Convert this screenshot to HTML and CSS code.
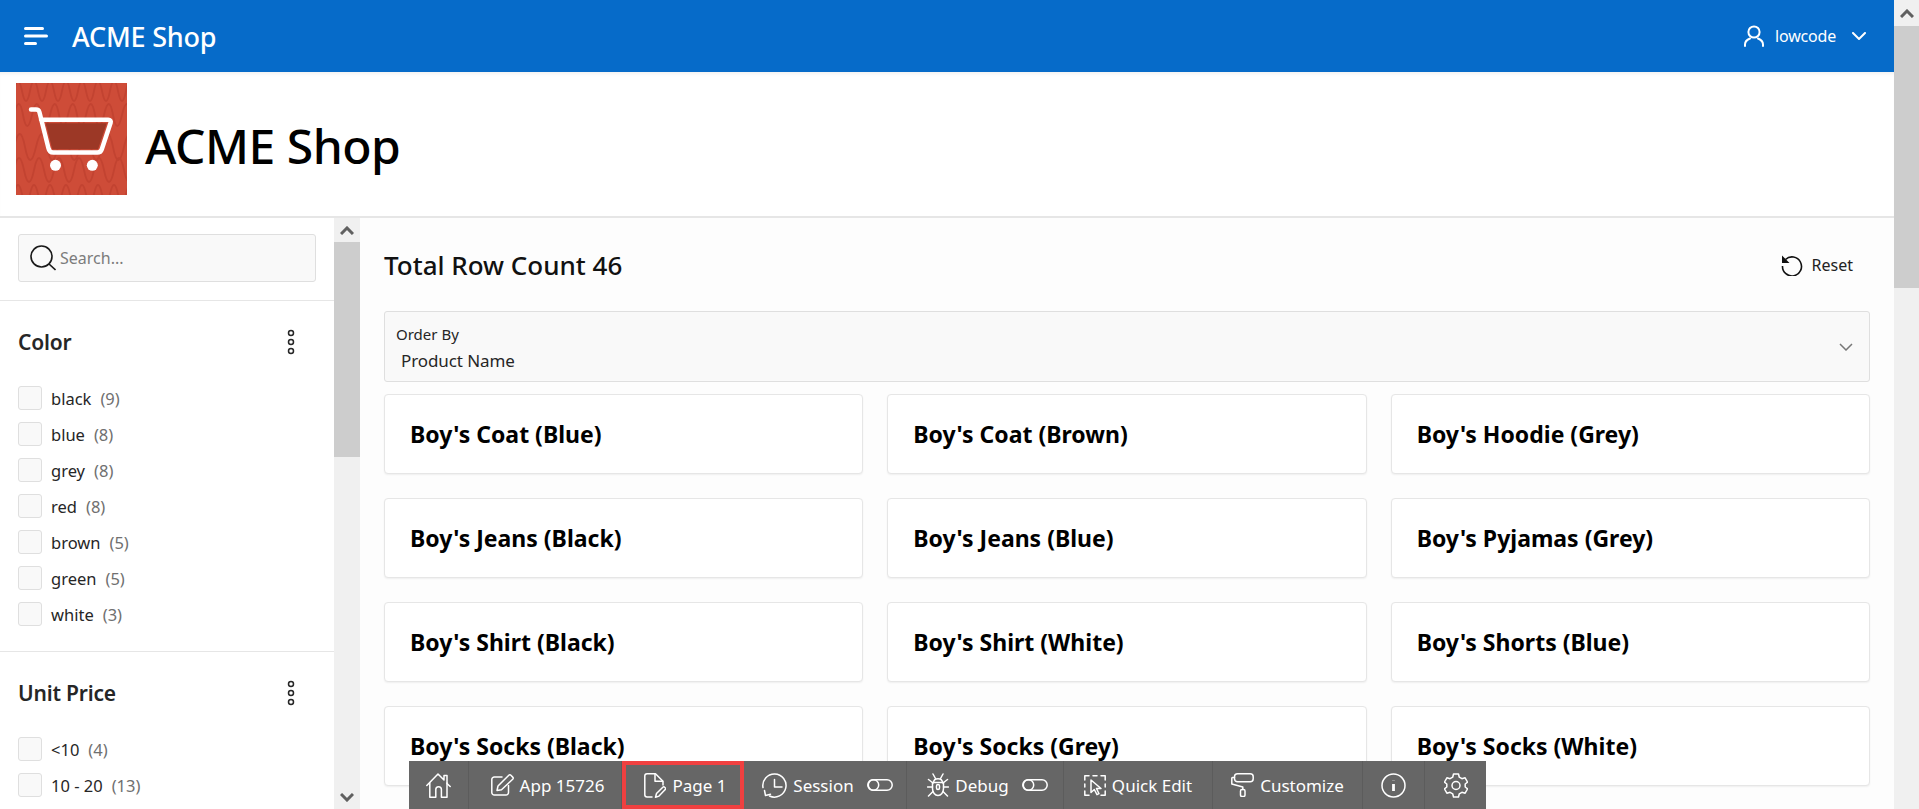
FILE: index.html
```html
<!DOCTYPE html>
<html>
<head>
  <title>ACME Shop</title>
  <link rel="stylesheet" href="styles.css">
</head>
<body>
  <div class="window">
    <div class="page">
      <header class="topbar">
        <svg class="menu-icon" width="24" height="20" viewBox="0 0 24 20"><path d="M1.500 2.500h17M1.500 10h21M1.500 17.500h10" /></svg>
        <span class="brand">ACME Shop</span>
        <div class="user">
          <svg class="user-icon" width="20" height="22" viewBox="0 0 20 22"><circle cx="10" cy="7" r="5.600" /><path d="M1 21v-1.500c0-3 2.500-5 5-6M19 21v-1.500c0-3-2.500-5-5-6" /></svg>
          <span class="user-name">lowcode</span>
          <svg class="user-chevron" width="14" height="8" viewBox="0 0 14 8"><path d="M1 1l6 6 6-6" /></svg>
        </div>
      </header>

      <section class="hero">
        <svg class="logo" width="111" height="112" viewBox="0 0 111 112">
          <rect width="111" height="112" fill="#ce4c38" />
          <path class="wave" d="M-2 8q4-20 8 0t8 0 8 0 8 0 8 0 8 0 8 0 8 0 8 0 8 0 8 0 8 0 8 0 8 0 8 0" />
          <path class="wave" d="M-2 32q5-22 9 0t9 0 9 0 9 0 9 0 9 0 9 0 9 0 9 0 9 0 9 0 9 0 9 0" />
          <path class="wave" d="M-2 64q6-26 11 0t11 0 11 0 11 0 11 0 11 0 11 0 11 0 11 0 11 0 11 0" />
          <path class="wave" d="M-2 87q5-24 10 0t10 0 10 0 10 0 10 0 10 0 10 0 10 0 10 0 10 0 10 0 10 0" />
          <path class="wave" d="M-2 111q4-18 8 0t8 0 8 0 8 0 8 0 8 0 8 0 8 0 8 0 8 0 8 0 8 0 8 0 8 0 8 0" />
          <path d="M29.700 40.300h61L82 66.300H36.300z" fill="#9c3826" />
          <path d="M15 26.500h5c2 0 3 1 3.400 2.500l9 36c.6 3 2 4.500 5 4.500h44c2.500 0 3.700-1.200 4.400-3.300l8.800-26.500c.6-1.800-.4-3-2.300-3H25" fill="none" stroke="#fff" stroke-width="4.500" stroke-linecap="round" stroke-linejoin="round" />
          <circle cx="39.500" cy="82.300" r="5.500" fill="#fff" />
          <circle cx="76.300" cy="82.300" r="5.500" fill="#fff" />
        </svg>
        <h1 class="hero-title">ACME Shop</h1>
      </section>

      <div class="content">
        <aside class="sidebar">
          <div class="search-row">
            <div class="search">
              <svg class="search-icon" width="26" height="26" viewBox="0 0 26 26"><circle cx="11.500" cy="11.500" r="10.500" /><path d="M19 19l6.500 6" /></svg>
              <span class="search-hint">Search...</span>
            </div>
          </div>

          <div class="facet facet-color">
            <div class="facet-head">
              <h2 class="facet-title">Color</h2>
              <svg class="more" width="8" height="26" viewBox="0 0 8 26"><circle cx="4" cy="4" r="2.500" /><circle cx="4" cy="13" r="2.500" /><circle cx="4" cy="22" r="2.500" /></svg>
            </div>
            <label class="check"><span class="box"></span>black<span class="count">(9)</span></label>
            <label class="check"><span class="box"></span>blue<span class="count">(8)</span></label>
            <label class="check"><span class="box"></span>grey<span class="count">(8)</span></label>
            <label class="check"><span class="box"></span>red<span class="count">(8)</span></label>
            <label class="check"><span class="box"></span>brown<span class="count">(5)</span></label>
            <label class="check"><span class="box"></span>green<span class="count">(5)</span></label>
            <label class="check"><span class="box"></span>white<span class="count">(3)</span></label>
          </div>

          <div class="facet">
            <div class="facet-head">
              <h2 class="facet-title">Unit Price</h2>
              <svg class="more" width="8" height="26" viewBox="0 0 8 26"><circle cx="4" cy="4" r="2.500" /><circle cx="4" cy="13" r="2.500" /><circle cx="4" cy="22" r="2.500" /></svg>
            </div>
            <label class="check"><span class="box"></span>&lt;10<span class="count">(4)</span></label>
            <label class="check"><span class="box"></span>10 - 20<span class="count">(13)</span></label>
          </div>
        </aside>

        <div class="scrollbar side-scrollbar">
          <div class="arrow"><svg width="14" height="9" viewBox="0 0 14 9"><path d="M1 8l6-6 6 6" /></svg></div>
          <div class="thumb side-thumb"></div>
          <div class="track"></div>
          <div class="arrow"><svg width="14" height="9" viewBox="0 0 14 9"><path d="M1 1l6 6 6-6" /></svg></div>
        </div>

        <main class="results">
          <div class="results-head">
            <h2 class="results-title">Total Row Count 46</h2>
            <div class="reset">
              <svg class="reset-icon" width="22" height="22" viewBox="0 0 22 22"><path d="M4.500 5.500A9.500 9.500 0 1 1 1.500 12" /><path class="reset-tip" d="M1 1.500v7.500h7.500z" /></svg>
              <span>Reset</span>
            </div>
          </div>

          <div class="order">
            <div class="order-text">
              <span class="order-label">Order By</span>
              <span class="order-value">Product Name</span>
            </div>
            <svg class="order-chevron" width="14" height="8" viewBox="0 0 14 8"><path d="M1 1l6 6 6-6" /></svg>
          </div>

          <div class="cards">
            <div class="card">Boy's Coat (Blue)</div>
            <div class="card">Boy's Coat (Brown)</div>
            <div class="card">Boy's Hoodie (Grey)</div>
            <div class="card">Boy's Jeans (Black)</div>
            <div class="card">Boy's Jeans (Blue)</div>
            <div class="card">Boy's Pyjamas (Grey)</div>
            <div class="card">Boy's Shirt (Black)</div>
            <div class="card">Boy's Shirt (White)</div>
            <div class="card">Boy's Shorts (Blue)</div>
            <div class="card">Boy's Socks (Black)</div>
            <div class="card">Boy's Socks (Grey)</div>
            <div class="card">Boy's Socks (White)</div>
          </div>
        </main>
      </div>
    </div>

    <div class="scrollbar page-scrollbar">
      <div class="arrow"><svg width="14" height="9" viewBox="0 0 14 9"><path d="M1 8l6-6 6 6" /></svg></div>
      <div class="thumb page-thumb"></div>
      <div class="track"></div>
    </div>
  </div>

  <nav class="devbar">
    <div class="dev-item dev-home">
      <svg width="25" height="25" viewBox="0 0 25 25"><path d="M.8 12.500L12 1l6 6V2.500h3V10.500l3.200 3" /><path d="M3.800 10v14.200h6V16.500a2.800 2.800 0 0 1 5.600 0v7.700H21V10" /></svg>
    </div>
    <div class="dev-item dev-app">
      <svg width="23" height="22" viewBox="0 0 23 22"><path d="M17.500 11.500v7A2.500 2.500 0 0 1 15 21H3.300A2.500 2.500 0 0 1 .8 18.500V5.500A2.500 2.500 0 0 1 3.300 3H11" /><path d="M6 16.500l1-4.500L17.800 1.300a1.500 1.500 0 0 1 2.100 0l1.800 1.800a1.500 1.500 0 0 1 0 2.100L10.500 15.800z" /></svg>
      <span>App 15726</span>
    </div>
    <div class="dev-item dev-page">
      <svg width="22" height="25" viewBox="0 0 22 25"><path d="M8 24H3a2.200 2.200 0 0 1-2.200-2.200V3A2.200 2.200 0 0 1 3 .8h8.500L19 8.300v3.700" /><path d="M11 1.500v6.800h7.500" /><path d="M11.500 24.200l1-3.700 6.300-6.300a1.300 1.300 0 0 1 1.900 0l.5.500a1.300 1.300 0 0 1 0 1.900l-6.200 6.500z" /></svg>
      <span>Page 1</span>
    </div>
    <div class="dev-item dev-session">
      <svg width="25" height="25" viewBox="0 0 25 25"><path d="M1 14.500A11.600 11.600 0 1 1 7.500 23" /><path d="M2.500 17.500l1 5 5-1.200" /><path d="M12.500 6.500V14H20" /></svg>
      <span>Session</span>
      <svg class="toggle" width="26" height="12" viewBox="0 0 26 12"><rect x=".8" y=".8" width="24.400" height="10.400" rx="5.200" /><circle cx="6.500" cy="6" r="5.200" /></svg>
    </div>
    <div class="dev-item dev-debug">
      <svg width="22" height="24" viewBox="0 0 22 24"><path d="M5.500 9.500h11v6a5.500 7 0 0 1-11 0z" /><path d="M6.500 9.500c.5-5 8.500-5 9 0" /><path d="M6 1l2.500 4.500M16 1l-2.500 4.500M.5 14h5M16.500 14h5M1.500 23l4.500-4.500M20.500 23L16 18.500M1.500 6.500L6 10M20.500 6.500L16 10" /><rect x="9.500" y="11.500" width="3" height="5" rx="1.500" /></svg>
      <span>Debug</span>
      <svg class="toggle" width="26" height="12" viewBox="0 0 26 12"><rect x=".8" y=".8" width="24.400" height="10.400" rx="5.200" /><circle cx="6.500" cy="6" r="5.200" /></svg>
    </div>
    <div class="dev-item dev-quick">
      <svg width="22" height="21" viewBox="0 0 22 21"><path d="M5 .8H.8V5M9 .8h4M17 .8h4.200V5M.8 9v3M21.200 9v3M.8 16v4.200H5M17 20.200h4.200V16" /><path d="M7 5v12.500l3.300-3 2.700 5.200 2-1-2.500-5.200h4.500z" /></svg>
      <span>Quick Edit</span>
    </div>
    <div class="dev-item dev-custom">
      <svg width="23" height="24" viewBox="0 0 23 24"><rect x="3.500" y=".8" width="18.700" height="8" rx="3" /><path d="M3.500 4.500H1.500a.8.8 0 0 0-.7.700V11l11 3v2.500" /><rect x="9.500" y="16.500" width="4.500" height="7" rx="1.500" /></svg>
      <span>Customize</span>
    </div>
    <div class="dev-item dev-info">
      <svg width="25" height="25" viewBox="0 0 25 25"><circle cx="12.500" cy="12.500" r="11.500" /><path class="info-mark" d="M12.500 11v7" /><path class="info-mark" d="M12.500 7v.300" /></svg>
    </div>
    <div class="dev-item dev-gear">
      <svg width="24" height="25" viewBox="0 0 24 25"><circle cx="12" cy="12.500" r="4" /><path d="M9.500 1h5l.8 3.200 2.600 1.500 3.200-.9 2.500 4.400-2.400 1.800v3l2.400 1.800-2.500 4.400-3.200-.9-2.600 1.500-.8 3.200h-5l-.8-3.200-2.600-1.500-3.200.9-2.500-4.400 2.400-1.800v-3L.4 9.200l2.500-4.400 3.200.9 2.600-1.500z" /></svg>
    </div>
  </nav>
</body>
</html>
```

FILE: styles.css
```css
:root {
  --blue: #066bc9;
  --line: #e6e6e6;
  --field: #f9f9f9;
  --field-line: #dfdfdf;
  --text: #262626;
  --font: "Noto Sans", "Open Sans", Arial, sans-serif;
}

* {
  box-sizing: border-box;
}

html, body {
  margin: 0;
  height: 100%;
  overflow: hidden;
}

body {
  font-family: var(--font);
  font-size: 16px;
  color: var(--text);
  background: #fff;
}

svg {
  flex: none;
  display: block;
}

h1, h2 {
  margin: 0;
}

.window {
  display: flex;
  height: 100vh;
}

.page {
  flex: 1;
  min-width: 0;
  display: flex;
  flex-direction: column;
}

/* top bar */
.topbar {
  flex: none;
  height: 72px;
  display: flex;
  align-items: center;
  padding: 0 28px 0 24px;
  background: var(--blue);
  color: #fff;
}

.menu-icon {
  fill: none;
  stroke: #fff;
  stroke-width: 3;
  stroke-linecap: round;
}

.brand {
  margin-left: 24px;
  font-size: 27px;
  font-weight: 500;
  letter-spacing: -0.2px;
}

.user {
  margin-left: auto;
  display: flex;
  align-items: center;
}

.user-icon, .user-chevron {
  fill: none;
  stroke: #fff;
  stroke-width: 2;
  stroke-linecap: round;
}

.user-name {
  margin: 0 16px 0 11px;
  font-size: 16px;
  letter-spacing: -0.2px;
}

/* logo and title */
.hero {
  flex: none;
  height: 146px;
  display: flex;
  align-items: flex-start;
  padding: 11px 0 0 16px;
  border-bottom: 2px solid var(--line);
  box-shadow: inset 0 4px 4px -3px rgba(0, 0, 0, 0.08);
}

.wave {
  fill: none;
  stroke: #c24331;
  stroke-width: 1.800;
}

.hero-title {
  margin: 33px 0 0 18px;
  font-size: 48px;
  line-height: 60px;
  font-weight: 500;
  color: #000;
  letter-spacing: -0.5px;
}

.content {
  flex: 1;
  min-height: 0;
  display: flex;
}

/* left filters */
.sidebar {
  flex: none;
  width: 334px;
  overflow: hidden;
}

.search-row {
  height: 83px;
  padding: 16px 18px 0;
  border-bottom: 1px solid var(--line);
}

.search {
  height: 48px;
  width: 298px;
  display: flex;
  align-items: center;
  padding-left: 11px;
  background: var(--field);
  border: 1px solid var(--field-line);
  border-radius: 3px;
}

.search-icon {
  fill: none;
  stroke: #1a1a1a;
  stroke-width: 1.600;
}

.search-hint {
  margin-left: 4px;
  color: #7c7c7c;
}

.facet {
  padding: 22px 18px 0;
}

.facet-color {
  height: 351px;
  border-bottom: 1px solid var(--line);
}

.facet-head {
  height: 38px;
  display: flex;
  align-items: center;
  justify-content: space-between;
  margin-bottom: 19px;
  padding-right: 21px;
}

.facet-title {
  font-size: 21px;
  font-weight: 600;
  letter-spacing: -0.2px;
}

.more {
  fill: none;
  stroke: #262626;
  stroke-width: 1.500;
}

.check {
  height: 36px;
  display: flex;
  align-items: center;
  font-size: 16.500px;
}

.box {
  width: 24px;
  height: 24px;
  margin-right: 9px;
  background: var(--field);
  border: 1px solid var(--field-line);
  border-radius: 3px;
}

.count {
  margin-left: 9px;
  color: #707070;
}

/* fake scrollbars */
.scrollbar {
  flex: none;
  display: flex;
  flex-direction: column;
  background: #f0f0f0;
}

.side-scrollbar {
  width: 26px;
}

.side-scrollbar .arrow {
  height: 24px;
}

.page-scrollbar {
  width: 25px;
}

.arrow {
  flex: none;
  height: 26px;
  display: flex;
  align-items: center;
  justify-content: center;
  fill: none;
  stroke: #606060;
  stroke-width: 3;
}

.thumb {
  flex: none;
  background: #cdcdcd;
}

.side-thumb {
  height: 215px;
}

.page-thumb {
  height: 262px;
}

.track {
  flex: 1;
}

/* results */
.results {
  flex: 1;
  min-width: 0;
  padding: 0 24px;
  background: #fdfdfd;
  overflow: hidden;
}

.results-head {
  height: 93px;
  display: flex;
  align-items: center;
  justify-content: space-between;
  padding-right: 17px;
}

.results-title {
  font-size: 26px;
  font-weight: 500;
  color: #111;
}

.reset {
  display: flex;
  align-items: center;
  gap: 9px;
  color: #222;
}

.reset-icon {
  fill: none;
  stroke: #111;
  stroke-width: 1.600;
}

.reset-tip {
  fill: #111;
  stroke: none;
}

.order {
  height: 71px;
  display: flex;
  align-items: center;
  justify-content: space-between;
  padding: 0 16px 0 11px;
  background: var(--field);
  border: 1px solid var(--field-line);
  border-radius: 3px;
}

.order-text {
  display: flex;
  flex-direction: column;
  padding-top: 2px;
}

.order-label {
  font-size: 15px;
  line-height: 26px;
}

.order-value {
  margin-left: 5px;
  font-size: 17px;
  line-height: 28px;
  letter-spacing: -0.1px;
}

.order-chevron {
  fill: none;
  stroke: #777;
  stroke-width: 1.500;
}

.cards {
  display: grid;
  grid-template-columns: repeat(3, 1fr);
  gap: 24px;
  margin-top: 12px;
}

.card {
  height: 80px;
  display: flex;
  align-items: center;
  padding-left: 25px;
  background: #fff;
  border: 1px solid var(--line);
  border-radius: 4px;
  box-shadow: 0 1px 2px rgba(0, 0, 0, 0.06);
  font-size: 23px;
  font-weight: 700;
  color: #000;
}

/* developer toolbar, sits on top of the page */
.devbar {
  position: fixed;
  left: 409px;
  bottom: 0;
  height: 48px;
  display: flex;
  background: #666;
  color: #fff;
  font-size: 17px;
}

.dev-item {
  display: flex;
  align-items: center;
  justify-content: center;
  gap: 6px;
  border-right: 1px solid #5c5c5c;
  white-space: nowrap;
}

.dev-item svg {
  fill: none;
  stroke: #fff;
  stroke-width: 1.500;
  stroke-linejoin: round;
  stroke-linecap: round;
}

.dev-item .info-mark {
  stroke-width: 2.800;
  stroke-linecap: butt;
}

.dev-home { width: 60px; }
.dev-app { width: 153px; padding-left: 5px; }
.dev-session { width: 163px; padding-left: 5px; }
.dev-debug { width: 157px; padding-left: 5px; }
.dev-quick { width: 149px; }
.dev-custom { width: 150px; }
.dev-info { width: 62px; }
.dev-gear { width: 61px; border-right: 0; }

.dev-page {
  width: 122px;
  padding-left: 5px;
  outline: 4px solid #ef4040;
  outline-offset: -4px;
  border-right: 0;
}

.toggle {
  margin-left: 7px;
}
```
